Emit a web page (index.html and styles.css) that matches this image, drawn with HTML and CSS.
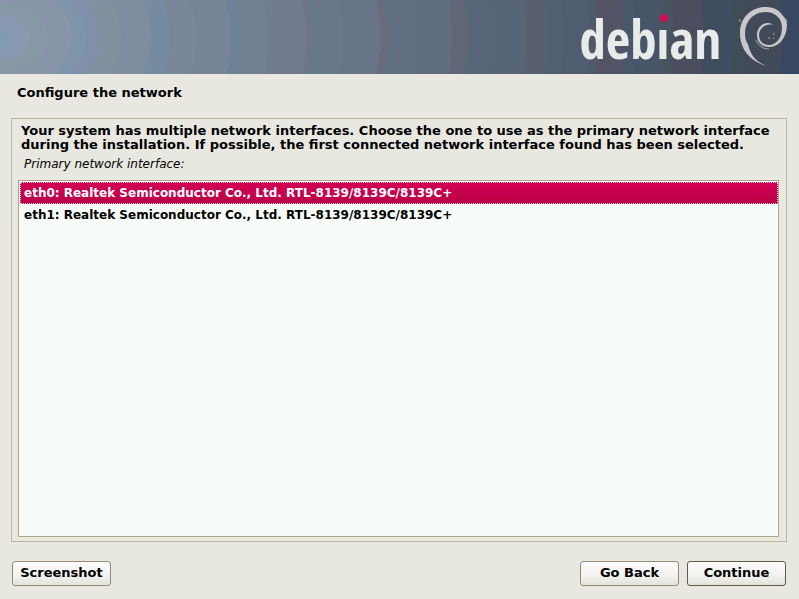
FILE: index.html
```html
<!DOCTYPE html>
<html lang="en">
<head>
<meta charset="utf-8">
<title>Configure the network</title>
<link rel="stylesheet" href="styles.css">
</head>
<body>
<header class="banner">
  <div class="wordmark">deb<span class="dotless">ı<svg class="diamond" viewBox="0 0 10 10" aria-hidden="true"><path d="M5 0L10 5L5 10L0 5Z"/></svg></span>an</div>
  <svg class="swirl" viewBox="0 0 50 60" aria-hidden="true">
    <path class="ink" d="M28 59C12 55 1 43 1 26C1 10 13 0 27 0C36 0 41 4 44 9L46 11L48 17C48 32 39 40 30 40C22 40 18 34 18 28C18 21 23 16 29 16C32 16 33 17 34 18C26 16 20 22 20 28C20 34 24 38 30 38C37 38 43 31 43 21C43 11 36 5 26 5C13 6 6 15 6 27C6 31 7 35 9 37L10 41C13 50 19 56 28 59Z"/>
    <path class="line" d="M17 33C20 39 24 42 30 42M1 12V15M47 12L48 15M20 21L22 19M29 31H31M35 26V28M34 32L35 31"/>
  </svg>
</header>
<form class="installer">
  <h1 class="title">Configure the network</h1>
  <main class="panel">
    <p class="question">Your system has multiple network interfaces. Choose the one to use as the primary network interface during the installation. If possible, the first connected network interface found has been selected.</p>
    <label class="prompt" for="interface">Primary network interface:</label>
    <select class="choices" id="interface" size="2">
      <option selected>eth0: Realtek Semiconductor Co., Ltd. RTL-8139/8139C/8139C+</option>
      <option>eth1: Realtek Semiconductor Co., Ltd. RTL-8139/8139C/8139C+</option>
    </select>
  </main>
  <footer class="actions">
    <button class="button screenshot" type="button">Screenshot</button>
    <button class="button" type="button">Go Back</button>
    <button class="button primary" type="submit">Continue</button>
  </footer>
</form>
</body>
</html>
```
FILE: styles.css
```css
* { box-sizing: border-box; }

body {
  margin: 0;
  min-height: 100vh;
  display: flex;
  flex-direction: column;
  background: #e8e8e0;
  color: #000;
  font: bold 13px/14px "DejaVu Sans", sans-serif;
}

.banner {
  height: 74px;
  padding-right: 10px;
  display: flex;
  justify-content: flex-end;
  align-items: center;
  gap: 18px;
  background: #384860 radial-gradient(800px 600px at 0 50%,
    #829bb0 12px, #8899b2 12px 29px, #8798a6 29px 48px, #8894a7 48px 72px,
    #7f94a8 72px 86px, #8090aa 86px 99px, #80909f 99px 121px, #808ca0 121px 151px,
    #758ba0 151px 159px, #788aa2 159px 170px, #788898 170px 196px, #788498 196px 231px,
    #6d8199 231px 240px, #708090 240px 269px, #707b90 269px 306px, #73748c 306px 309px,
    #687888 309px 343px, #687488 343px 380px, #686c7c 380px 387px, #607080 387px 417px,
    #606c80 417px 452px, #606676 452px 467px, #58687a 467px 490px, #586478 490px 526px,
    #585f6e 526px 546px, #506070 546px 563px, #505c70 563px 590px, #4f5a66 590px 598px,
    #525466 598px 624px, #48586a 624px 635px, #485468 635px 660px, #485460 660px 673px,
    #4a4e5e 673px 703px, #404c60 703px 732px, #404c58 732px 745px, #424a5a 745px 782px,
    #384860 782px);
}

.wordmark {
  padding-top: 4px;
  color: #e8ece8;
  font: bold 53px/60px "Open Sans Condensed", "Roboto Condensed", "Noto Sans Condensed", "DejaVu Sans Condensed", sans-serif;
}

.dotless { position: relative; }

.diamond {
  position: absolute;
  top: 11px;
  left: 2px;
  width: 10px;
  height: 10px;
  fill: #d70751;
}

.swirl { width: 50px; height: 60px; }
.ink { fill: #c8c8c8; }
.line { fill: none; stroke: #a8acb2; stroke-width: 1; }

.installer {
  flex: 1;
  display: flex;
  flex-direction: column;
  padding: 12px 12px 13px 11px;
}

.title {
  margin: 0 6px 18px;
  font-size: 13px;
  line-height: 14px;
}

.panel {
  flex: 1;
  display: flex;
  flex-direction: column;
  padding: 5px 7px 4px 6px;
  border: 1px solid #bcb4a4;
}

.question { margin: 0 3px 5px; }

.prompt {
  margin: 0 6px 9px;
  font-size: 12px;
  font-weight: normal;
  font-style: italic;
}

.choices {
  flex: 1;
  padding: 1px 0 1px 1px;
  border: 1px solid #b4a488;
  border-radius: 0;
  outline: none;
  overflow: hidden;
  background: #f8fcf8;
  color: #000;
  font: inherit;
  font-size: 12px;
}

.choices option {
  min-height: 22px;
  padding: 3px;
  border: 1px solid transparent;
  font-weight: bold;
}

.choices option:checked {
  border: 1px dotted #f8d0e0;
  background: linear-gradient(#d40054, #b80044) border-box;
  color: #fff;
}

.actions {
  display: flex;
  gap: 8px;
  padding: 19px 1px 0;
}

.button {
  width: 99px;
  height: 25px;
  padding: 0 0 2px;
  border: 1px solid #948a74;
  border-radius: 3px;
  background: linear-gradient(#fcfcfa, #f2f2ef 55%, #e4e4dc);
  color: #000;
  font: inherit;
}

.screenshot { margin-right: auto; }
.primary { border-color: #605848; }
```
